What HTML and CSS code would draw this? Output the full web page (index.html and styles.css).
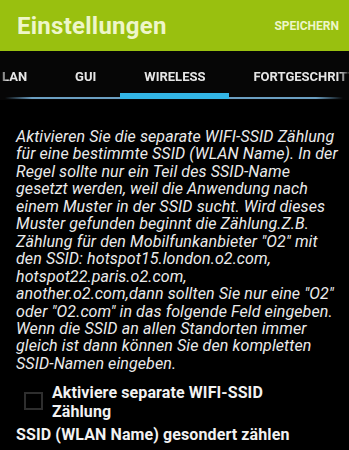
FILE: index.html
```
<!DOCTYPE html>
<html lang="de">
<head>
<meta charset="utf-8">
<title>Einstellungen</title>
<link rel="stylesheet" href="styles.css">
</head>
<body>
<div class="screen">
  <header class="appbar">
    <h1 class="title">Einstellungen</h1>
    <span class="action">SPEICHERN</span>
  </header>
  <nav class="tabs">
    <div class="tab-row">
      <span class="tab">LAN</span>
      <span class="tab">GUI</span>
      <span class="tab active">WIRELESS</span>
      <span class="tab">FORTGESCHRITTEN</span>
    </div>
  </nav>
  <main class="content">
    <p class="desc">Aktivieren Sie die separate WIFI-SSID Zählung<br>für eine bestimmte SSID (WLAN Name). In der<br>Regel sollte nur ein Teil des SSID-Name<br>gesetzt werden, weil die Anwendung nach<br>einem Muster in der SSID sucht. Wird dieses<br>Muster gefunden beginnt die Zählung.Z.B.<br>Zählung für den Mobilfunkanbieter "O2" mit<br>den SSID: hotspot15.london.o2.com,<br>hotspot22.paris.o2.com,<br>another.o2.com,dann sollten Sie nur eine "O2"<br>oder "O2.com" in das folgende Feld eingeben.<br>Wenn die SSID an allen Standorten immer<br>gleich ist dann können Sie den kompletten<br>SSID-Namen eingeben.</p>
    <label class="check">
      <span class="box"></span>
      <span class="check-label">Aktiviere separate WIFI-SSID<br>Zählung</span>
    </label>
    <h2 class="section">SSID (WLAN Name) gesondert zählen</h2>
  </main>
</div>
</body>
</html>
```

FILE: styles.css
```
* { box-sizing: border-box; }
html, body { margin: 0; padding: 0; background: #000; }
body { font-family: Roboto, "Noto Sans", sans-serif; }
.screen { width: 349px; height: 450px; overflow: hidden; background: #000; }

.appbar {
  height: 51px;
  background: #99c00f;
  display: flex;
  align-items: center;
  justify-content: space-between;
  padding: 0 10px 0 17px;
}
.title {
  margin: 0;
  font-size: 24px;
  font-weight: 700;
  color: #eef6c9;
  letter-spacing: 0.25px;
}
.action {
  font-size: 12px;
  font-weight: 700;
  color: #eef6c9;
}

.tabs {
  height: 49px;
  background-color: #060606;
  background-image: linear-gradient(90deg, rgba(90,150,190,0), #6b9fc2 8%, #6b9fc2 92%, rgba(90,150,190,0));
  background-repeat: no-repeat;
  background-size: 338px 2px;
  background-position: 5px 46px;
  overflow: hidden;
}
.tab-row {
  display: flex;
  height: 48px;
  margin-left: -22px;
  -webkit-mask-image: linear-gradient(90deg, rgba(0,0,0,0.3) 22px, #000 30px, #000 calc(100% - 10px), rgba(0,0,0,0.2));
  mask-image: linear-gradient(90deg, rgba(0,0,0,0.3) 22px, #000 30px, #000 calc(100% - 10px), rgba(0,0,0,0.2));
  width: 371px;
}
.tab {
  flex: none;
  display: flex;
  align-items: center;
  padding: 3px 24px 0;
  font-size: 13px;
  font-weight: 700;
  color: #e6e6e6;
  white-space: nowrap;
}
.tab.active { box-shadow: inset 0 -6px 0 #33b5e5; }

.content { padding: 28px 0 0 16px; }
.desc {
  margin: 0;
  font-size: 16px;
  letter-spacing: 0.1px;
  line-height: 17.45px;
  font-style: italic;
  color: #ebebeb;
  white-space: nowrap;
}
.check {
  display: flex;
  align-items: flex-start;
  margin-top: 12px;
}
.box {
  flex: none;
  width: 19px;
  height: 18px;
  margin: 8px 9px 0 8px;
  border: 2px solid #2e2e2e;
}
.check-label {
  font-size: 16px;
  letter-spacing: 0.1px;
  line-height: 18.7px;
  font-weight: 700;
  color: #f2f2f2;
}
.section {
  margin: 4px 0 0;
  font-size: 16px;
  letter-spacing: 0.1px;
  line-height: 18.7px;
  font-weight: 700;
  color: #f2f2f2;
}
```
